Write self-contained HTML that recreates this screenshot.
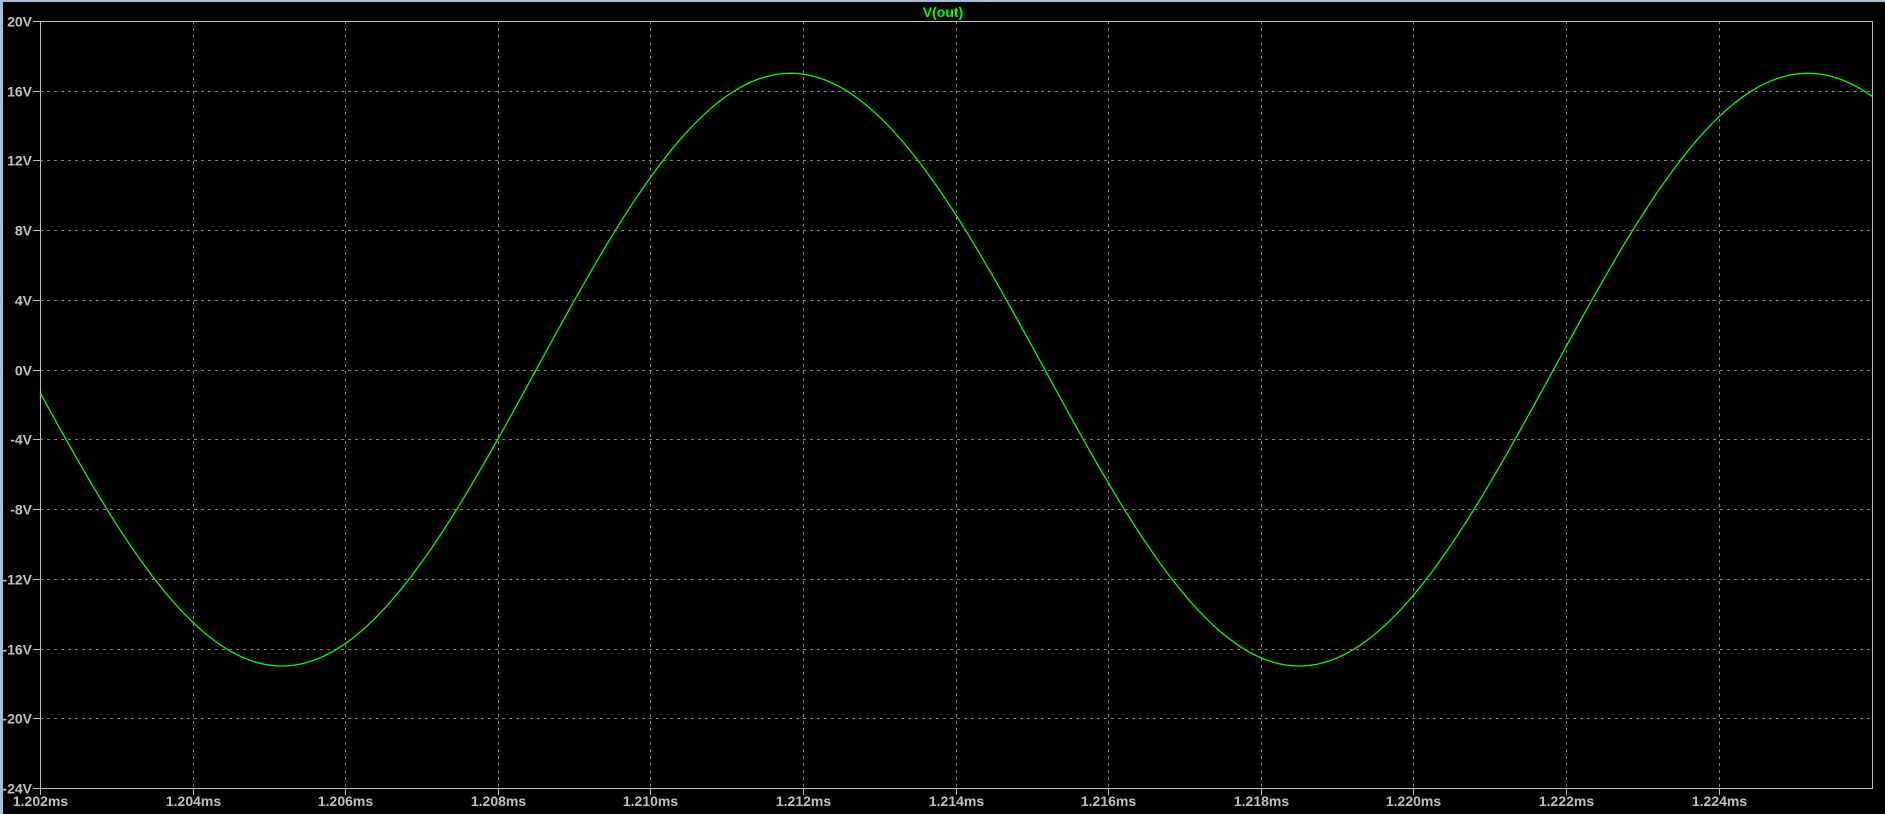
<!DOCTYPE html>
<html><head><style>
html,body{margin:0;padding:0;background:#000;width:1885px;height:814px;overflow:hidden}
svg{display:block}
text{font-family:"Liberation Sans",sans-serif;font-weight:bold;font-size:14px;fill:#c0c0c0}
</style></head><body>
<svg id="s" width="1885" height="814" xmlns="http://www.w3.org/2000/svg">
<rect x="0" y="0" width="1885" height="814" fill="#000"/>
<rect x="0" y="0" width="1885" height="2" fill="#a9bcd6"/>
<rect x="0" y="0" width="3" height="814" fill="#a9bcd6"/>
<text x="943" y="17" text-anchor="middle" style="fill:#00ff00">V(out)</text>
<g id="g"></g>
<rect x="40.5" y="21.5" width="1832" height="767" fill="none" stroke="#c0c0c0" stroke-width="1"/>
<polyline id="w" fill="none" stroke="#00ff00" stroke-width="1.3"/>
</svg>
<script>
var g=document.getElementById('g'),ns="http://www.w3.org/2000/svg",h='';
var L=40,R=1872,T=21,B=788,dx=152.6,dy=(B-T)/11;
for(var i=0;i<=11;i++){var y=Math.round(T+i*dy)+0.5,v=20-4*i;
 if(i>0&&i<11)h+='<line x1="'+L+'" y1="'+y+'" x2="'+R+'" y2="'+y+'" stroke="#808080" stroke-dasharray="3,4"/>';
 h+='<line x1="33" y1="'+y+'" x2="40" y2="'+y+'" stroke="#c0c0c0"/>';
 h+='<text x="32" y="'+(y+5)+'" text-anchor="end">'+v+'V</text>';}
for(var j=0;j<=11;j++){var x=Math.round(L+j*dx)+0.5;
 if(j>0)h+='<line x1="'+x+'" y1="'+T+'" x2="'+x+'" y2="'+B+'" stroke="#808080" stroke-dasharray="3,4"/>';
 h+='<line x1="'+x+'" y1="'+B+'" x2="'+x+'" y2="'+(B+7)+'" stroke="#c0c0c0"/>';
 h+='<text x="'+x+'" y="'+(B+18)+'" text-anchor="middle">'+(1.202+0.002*j).toFixed(3)+'ms</text>';}
g.innerHTML=h;
var p=[];for(var x=L;x<=R;x++){var t=(x-L)/dx*2+1202;var v=-17*Math.cos(2*Math.PI*(t-1205.17)/13.333);
 p.push(x+','+(T+(20-v)/4*dy).toFixed(1));}
document.getElementById('w').setAttribute('points',p.join(' '));
</script>
</body></html>
